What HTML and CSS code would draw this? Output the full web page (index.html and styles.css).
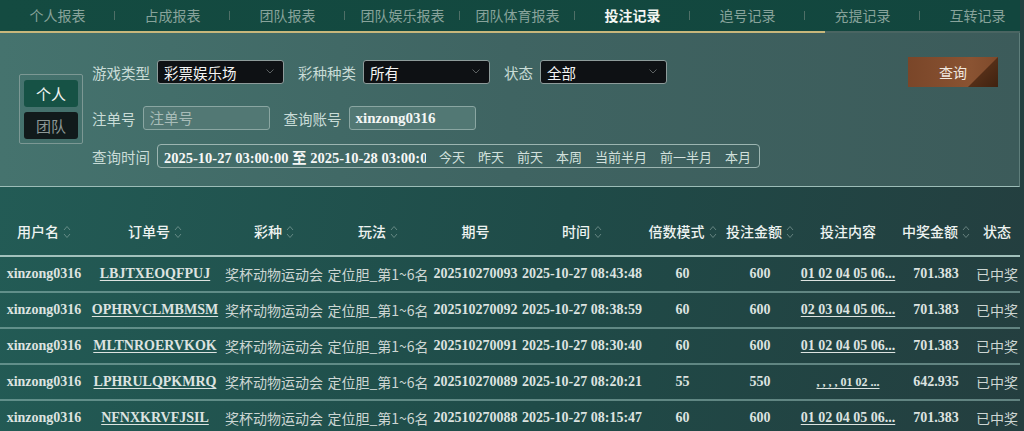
FILE: index.html
```html
<!DOCTYPE html>
<html lang="zh-CN">
<head>
  <meta charset="UTF-8" />
  <meta name="viewport" content="width=device-width, initial-scale=1.0"/>
  <title>投注记录</title>
  <link rel="stylesheet" href="styles.css">
</head>
<body>
<div class="page">

  <nav class="tabs">
    <a class="tab">个人报表</a>
    <a class="tab">占成报表</a>
    <a class="tab">团队报表</a>
    <a class="tab">团队娱乐报表</a>
    <a class="tab">团队体育报表</a>
    <a class="tab active">投注记录</a>
    <a class="tab">追号记录</a>
    <a class="tab">充提记录</a>
    <a class="tab">互转记录</a>
  </nav>
  <div class="tab-line"><span></span></div>

  <section class="filter">
    <div class="scope">
      <div class="scope-btn on">个人</div>
      <div class="scope-btn">团队</div>
    </div>

    <div class="fields">
      <div class="row">
        <label>游戏类型</label>
        <div class="select"><span>彩票娱乐场</span><svg class="caret" width="8" height="5" viewBox="0 0 8 5"><path d="M0.5 0.5 L4 4 L7.5 0.5" fill="none" stroke="#5d6263" stroke-width="1"/></svg></div>
        <label>彩种种类</label>
        <div class="select"><span>所有</span><svg class="caret" width="8" height="5" viewBox="0 0 8 5"><path d="M0.5 0.5 L4 4 L7.5 0.5" fill="none" stroke="#5d6263" stroke-width="1"/></svg></div>
        <label>状态</label>
        <div class="select"><span>全部</span><svg class="caret" width="8" height="5" viewBox="0 0 8 5"><path d="M0.5 0.5 L4 4 L7.5 0.5" fill="none" stroke="#5d6263" stroke-width="1"/></svg></div>
      </div>
      <div class="row row2">
        <label>注单号</label>
        <div class="input placeholder">注单号</div>
        <label>查询账号</label>
        <div class="input value">xinzong0316</div>
      </div>
      <div class="row row3">
        <label>查询时间</label>
        <div class="date-box">
          <div class="date-range">2025-10-27 03:00:00 至 2025-10-28 03:00:00</div>
          <span class="quick">今天</span>
          <span class="quick">昨天</span>
          <span class="quick">前天</span>
          <span class="quick">本周</span>
          <span class="quick">当前半月</span>
          <span class="quick">前一半月</span>
          <span class="quick">本月</span>
        </div>
      </div>
    </div>

    <div class="search-btn">查询</div>
  </section>

  <table class="records">
    <colgroup>
      <col style="width:88px"><col style="width:134px"><col style="width:104px"><col style="width:104px">
      <col style="width:91px"><col style="width:122px"><col style="width:79px"><col style="width:76px">
      <col style="width:100px"><col style="width:76px"><col style="width:46px">
    </colgroup>
    <thead>
      <tr>
        <th>用户名<svg class="sort" width="8" height="16" viewBox="0 0 8 16"><path d="M1 6 L4 2.5 L7 6 M1 10 L4 13.5 L7 10" fill="none" stroke="#a9c0bb" stroke-width="1"/></svg></th>
        <th>订单号<svg class="sort" width="8" height="16" viewBox="0 0 8 16"><path d="M1 6 L4 2.5 L7 6 M1 10 L4 13.5 L7 10" fill="none" stroke="#a9c0bb" stroke-width="1"/></svg></th>
        <th>彩种<svg class="sort" width="8" height="16" viewBox="0 0 8 16"><path d="M1 6 L4 2.5 L7 6 M1 10 L4 13.5 L7 10" fill="none" stroke="#a9c0bb" stroke-width="1"/></svg></th>
        <th>玩法<svg class="sort" width="8" height="16" viewBox="0 0 8 16"><path d="M1 6 L4 2.5 L7 6 M1 10 L4 13.5 L7 10" fill="none" stroke="#a9c0bb" stroke-width="1"/></svg></th>
        <th>期号</th>
        <th>时间<svg class="sort" width="8" height="16" viewBox="0 0 8 16"><path d="M1 6 L4 2.5 L7 6 M1 10 L4 13.5 L7 10" fill="none" stroke="#a9c0bb" stroke-width="1"/></svg></th>
        <th>倍数模式<svg class="sort" width="8" height="16" viewBox="0 0 8 16"><path d="M1 6 L4 2.5 L7 6 M1 10 L4 13.5 L7 10" fill="none" stroke="#a9c0bb" stroke-width="1"/></svg></th>
        <th>投注金额<svg class="sort" width="8" height="16" viewBox="0 0 8 16"><path d="M1 6 L4 2.5 L7 6 M1 10 L4 13.5 L7 10" fill="none" stroke="#a9c0bb" stroke-width="1"/></svg></th>
        <th>投注内容</th>
        <th>中奖金额<svg class="sort" width="8" height="16" viewBox="0 0 8 16"><path d="M1 6 L4 2.5 L7 6 M1 10 L4 13.5 L7 10" fill="none" stroke="#a9c0bb" stroke-width="1"/></svg></th>
        <th>状态</th>
      </tr>
    </thead>
    <tbody>
      <tr>
        <td>xinzong0316</td><td><u>LBJTXEOQFPUJ</u></td><td class="cn">奖杯动物运动会</td><td class="cn">定位胆_第1~6名</td>
        <td>202510270093</td><td>2025-10-27 08:43:48</td><td>60</td><td>600</td>
        <td><u>01 02 04 05 06...</u></td><td>701.383</td><td class="cn">已中奖</td>
      </tr>
      <tr>
        <td>xinzong0316</td><td><u>OPHRVCLMBMSM</u></td><td class="cn">奖杯动物运动会</td><td class="cn">定位胆_第1~6名</td>
        <td>202510270092</td><td>2025-10-27 08:38:59</td><td>60</td><td>600</td>
        <td><u>02 03 04 05 06...</u></td><td>701.383</td><td class="cn">已中奖</td>
      </tr>
      <tr>
        <td>xinzong0316</td><td><u>MLTNROERVKOK</u></td><td class="cn">奖杯动物运动会</td><td class="cn">定位胆_第1~6名</td>
        <td>202510270091</td><td>2025-10-27 08:30:40</td><td>60</td><td>600</td>
        <td><u>01 02 04 05 06...</u></td><td>701.383</td><td class="cn">已中奖</td>
      </tr>
      <tr>
        <td>xinzong0316</td><td><u>LPHRULQPKMRQ</u></td><td class="cn">奖杯动物运动会</td><td class="cn">定位胆_第1~6名</td>
        <td>202510270089</td><td>2025-10-27 08:20:21</td><td>55</td><td>550</td>
        <td><u class="thin">, , , , 01 02 ...</u></td><td>642.935</td><td class="cn">已中奖</td>
      </tr>
      <tr>
        <td>xinzong0316</td><td><u>NFNXKRVFJSIL</u></td><td class="cn">奖杯动物运动会</td><td class="cn">定位胆_第1~6名</td>
        <td>202510270088</td><td>2025-10-27 08:15:47</td><td>60</td><td>600</td>
        <td><u>01 02 04 05 06...</u></td><td>701.383</td><td class="cn">已中奖</td>
      </tr>
    </tbody>
  </table>

</div>
</body>
</html>
```

FILE: styles.css
```css
* { box-sizing: border-box; margin: 0; padding: 0; }
html, body {
  height: 100%;
  overflow: hidden;
}
body {
  background: linear-gradient(100deg, #235c56 0%, #1f4b48 55%, #243e3f 100%);
  font-family: "Noto Sans CJK SC", "Noto Sans", sans-serif;
  font-size: 14px;
  color: #e6ecea;
}
.page { width: 1020px; }

/* top tabs */
.tabs {
  display: flex;
  height: 31px;
  overflow: hidden;
  background: linear-gradient(to right, #144b41, #12463e);
}
.tab {
  flex: none;
  width: 115px;
  position: relative;
  text-align: center;
  line-height: 31px;
  font-size: 14px;
  color: #88a39b;
}
.tab::after {
  content: "";
  position: absolute;
  right: 0; top: 11px;
  width: 1px; height: 9px;
  background: #4f6f67;
}
.tab:last-child::after { display: none; }
.tab.active { color: #f4f6f2; font-weight: 700; }

.tab-line {
  height: 2px;
  background: #4a6562;
}
.tab-line span {
  display: block;
  width: 825px;
  height: 2px;
  background: #c8b77b;
}

/* filter panel */
.filter {
  display: flex;
  align-items: flex-start;
  height: 154px;
  padding-left: 19px;
  background: linear-gradient(to right, #45736e, #3f6462 50%, #3c5b5a);
  border-bottom: 1px solid #9dbdb8;
  border-right: 1px solid #5f7e7b;
}
.scope {
  margin-top: 41px;
  width: 64px;
  padding: 5px 4px 4px;
  border: 1px solid #7c9894;
  border-radius: 2px;
  display: flex;
  flex-direction: column;
  gap: 5px;
}
.scope-btn {
  height: 27px;
  line-height: 27px;
  text-align: center;
  border-radius: 3px;
  font-size: 15px;
  background: #111a1b;
  color: #8d9896;
}
.scope-btn.on { background: #165245; color: #f2f5f3; }

.fields {
  margin-left: 9px;
  padding-top: 27px;
}
.row {
  display: flex;
  align-items: center;
  gap: 7px;
  height: 24px;
}
.row2 { margin-top: 22px; }
.row3 { margin-top: 14px; }
.row label {
  color: #c9dcd7;
  font-size: 14.5px;
  white-space: nowrap;
}
.select, .input {
  width: 127px;
  height: 24px;
  margin-right: 7px;
  border-radius: 3px;
}
.select {
  display: flex;
  align-items: center;
  justify-content: space-between;
  padding: 0 9px 0 6px;
  background: #0e1114;
  border: 1px solid #8e9c9b;
  color: #f5f5f5;
  font-size: 14.5px;
}
.caret { margin-top: -2px; }
.input {
  padding-left: 6px;
  line-height: 22px;
  background: #527874;
  border: 1px solid #8aa6a2;
}
.input.placeholder { color: #a8bcb8; font-size: 14.5px; }
.input.value {
  font-family: "Liberation Serif", serif;
  font-weight: 700;
  color: #f4f6f5;
  font-size: 15px;
}
.date-box {
  display: flex;
  align-items: center;
  width: 603px;
  height: 24px;
  padding-left: 6px;
  border: 1px solid #9cb5b1;
  border-radius: 4px;
  gap: 13px;
}
.date-range {
  width: 262px;
  flex: none;
  overflow: hidden;
  white-space: nowrap;
  font-family: "Liberation Serif", "Noto Sans CJK SC", serif;
  font-weight: 700;
  font-size: 14.5px;
  color: #f6f7f6;
}
.quick {
  font-size: 13px;
  color: #d2e0dc;
  white-space: nowrap;
}

.search-btn {
  margin: 24px 21px 0 auto;
  width: 90px;
  height: 30px;
  line-height: 30px;
  text-align: center;
  position: relative;
  color: #f1e9e0;
  font-size: 14px;
  background: linear-gradient(to right, #7a4629, #8a5332 70%, #7f4a2b);
}
.search-btn::after {
  content: "";
  position: absolute;
  right: 0; top: 0;
  width: 30px; height: 30px;
  background: linear-gradient(135deg, #6a3b1f, #3f2210);
  clip-path: polygon(100% 0, 100% 100%, 0 100%);
}

/* records table */
.records {
  width: 1020px;
  margin-top: 20px;
  table-layout: fixed;
  border-collapse: collapse;
}
.records th {
  height: 49px;
  padding: 0;
  font-weight: 500;
  font-size: 14px;
  color: #eef3f1;
  white-space: nowrap;
  text-align: center;
  border-bottom: 2px solid #a2c1bc;
}
.sort {
  margin-left: 4px;
  vertical-align: -3px;
  opacity: 0.5;
}
.records td {
  height: 36px;
  padding: 0;
  text-align: center;
  white-space: nowrap;
  overflow: hidden;
  font-family: "Liberation Serif", "Noto Sans CJK SC", serif;
  font-weight: 700;
  font-size: 14px;
  color: #dde3e0;
  border-bottom: 2px solid rgba(150, 188, 182, 0.55);
}
.records td.cn {
  font-family: "Noto Sans CJK SC", sans-serif;
  font-weight: 400;
  color: #cdd6d3;
}
.records u { text-underline-offset: 2px; }
.records u.thin { font-size: 12px; }
```
